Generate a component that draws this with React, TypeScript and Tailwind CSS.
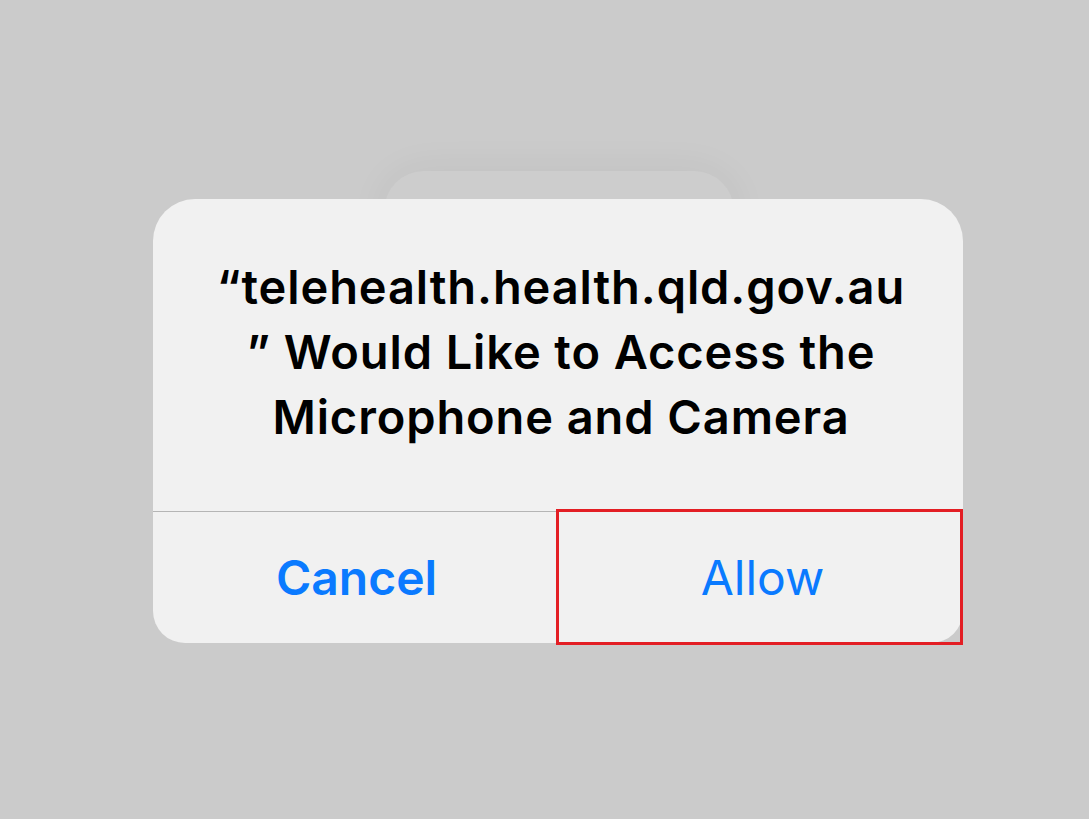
import React from "react";

export default function App() {
  const font = { fontFamily: "Inter, 'Noto Sans', 'Liberation Sans', sans-serif" };
  return (
    <div className="w-[1089px] h-[819px] bg-[#cbcbcb] overflow-hidden" style={font}>
      <div className="pt-[171px] pl-[153px]">
        <div className="ml-[231px] w-[350px] h-[60px] rounded-t-[40px] bg-[#cdcdcd] shadow-[0_0_40px_rgba(0,0,0,0.06)]" />
        <div className="relative -mt-[32px] w-[810px] h-[444px] rounded-t-[42px] rounded-b-[32px] bg-[#f1f1f1] flex flex-col">
          <div className="h-[312px] flex flex-col items-center pt-[55px] text-black font-semibold text-[47px] leading-[65px] tracking-[0.9px]">
            <div className="pl-[6px]">“telehealth.health.qld.gov.au</div>
            <div className="pl-[6px]">” Would Like to Access the</div>
            <div className="pl-[6px]">Microphone and Camera</div>
          </div>
          <div className="h-px bg-[#b5b5b5]" />
          <div className="flex-1 grid grid-cols-2 text-[#0a7aff] text-[48px]">
            <div className="flex items-center justify-center font-semibold pl-[2px]">Cancel</div>
            <div className="flex items-center justify-center font-normal pl-[4px]">Allow</div>
          </div>
          <div className="absolute left-[403px] top-[310px] w-[407px] h-[136px] border-[3px] border-[#e31e24]" />
        </div>
      </div>
    </div>
  );
}
